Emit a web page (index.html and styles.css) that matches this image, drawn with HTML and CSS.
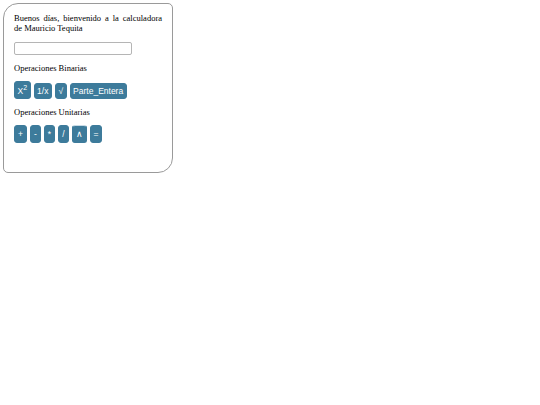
FILE: index.html
```html
<!DOCTYPE html>
<html lang="es">
<head>
<meta charset="utf-8">
<title>Calculadora</title>
<link rel="stylesheet" href="styles.css">
</head>
<body>
<div class="card">
  <p class="greet">Buenos días, bienvenido a la calculadora de Mauricio Tequita</p>
  <input class="display" type="text">
  <p class="section">Operaciones Binarias</p>
  <div class="row">
    <button class="btn">X<sup>2</sup></button>
    <button class="btn">1/x</button>
    <button class="btn">√</button>
    <button class="btn">Parte_Entera</button>
  </div>
  <p class="section">Operaciones Unitarias</p>
  <div class="row small">
    <button class="btn">+</button>
    <button class="btn">-</button>
    <button class="btn">*</button>
    <button class="btn">/</button>
    <button class="btn hover">∧</button>
    <button class="btn">=</button>
  </div>
</div>
</body>
</html>
```
FILE: styles.css
```css
html, body {
  margin: 0;
  padding: 0;
  background: #ffffff;
}
body {
  font-family: "Liberation Serif", "Times New Roman", serif;
  font-size: 8.5px;
  color: #000;
}
.card {
  box-sizing: border-box;
  width: 170px;
  height: 170px;
  margin: 3px;
  padding: 9px 10px 0 10px;
  border: 1px solid #9a9a9a;
  border-radius: 15px 5px 15px 5px;
}
.greet {
  margin: 0;
  line-height: 10px;
  text-align: justify;
}
.display {
  display: block;
  box-sizing: border-box;
  width: 118px;
  height: 13px;
  margin: 9px 0 0 0;
  padding: 0;
  border: 1px solid #b5b5b5;
  border-radius: 2px;
  background: #fff;
}
.section {
  margin: 8px 0 0 0;
  line-height: 10px;
}
.row {
  display: flex;
  align-items: flex-end;
  gap: 3px;
  margin-top: 8px;
  margin-bottom: 2px;
}
.row.small {
  margin-top: 8px;
}
.btn {
  font-family: "Liberation Sans", Arial, sans-serif;
  font-size: 8.5px;
  color: #ffffff;
  background: #3d7b9b;
  border: 1px solid #3d7b9b;
  border-radius: 3px;
  padding: 2px 2.5px;
  line-height: 10px;
  margin: 0;
}
.btn sup {
  font-size: 7px;
  line-height: 8px;
  vertical-align: 4px;
}
.row.small .btn {
  padding: 3px 3px;
}
.btn.hover {
  border-color: #c9dbe6 #3d7b9b #3d7b9b #3d7b9b;
}
```
